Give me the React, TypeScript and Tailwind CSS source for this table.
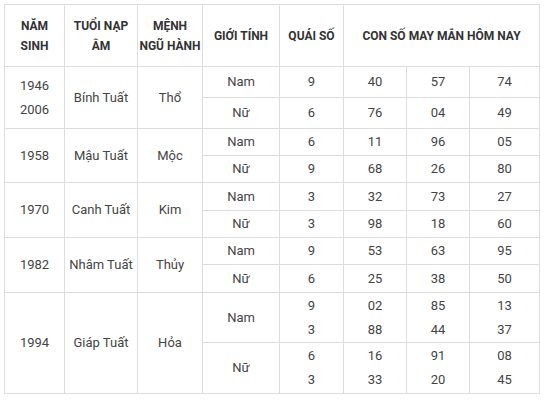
const rows = [
  {
    year: ["1946", "2006"],
    tuoi: "Bính Tuất",
    menh: "Thổ",
    h: ["h-[31px]", "h-[31px]"],
    sub: [
      { gt: "Nam", qs: ["9"], n: [["40", "57", "74"]] },
      { gt: "Nữ", qs: ["6"], n: [["76", "04", "49"]] },
    ],
  },
  {
    year: ["1958"],
    tuoi: "Mậu Tuất",
    menh: "Mộc",
    h: ["h-[27px]", "h-[27px]"],
    sub: [
      { gt: "Nam", qs: ["6"], n: [["11", "96", "05"]] },
      { gt: "Nữ", qs: ["9"], n: [["68", "26", "80"]] },
    ],
  },
  {
    year: ["1970"],
    tuoi: "Canh Tuất",
    menh: "Kim",
    h: ["h-[28px]", "h-[27px]"],
    sub: [
      { gt: "Nam", qs: ["3"], n: [["32", "73", "27"]] },
      { gt: "Nữ", qs: ["3"], n: [["98", "18", "60"]] },
    ],
  },
  {
    year: ["1982"],
    tuoi: "Nhâm Tuất",
    menh: "Thủy",
    h: ["h-[27px]", "h-[28px]"],
    sub: [
      { gt: "Nam", qs: ["9"], n: [["53", "63", "95"]] },
      { gt: "Nữ", qs: ["6"], n: [["25", "38", "50"]] },
    ],
  },
  {
    year: ["1994"],
    tuoi: "Giáp Tuất",
    menh: "Hỏa",
    h: ["h-[50px]", "h-[51px]"],
    sub: [
      { gt: "Nam", qs: ["9", "3"], n: [["02", "85", "13"], ["88", "44", "37"]] },
      { gt: "Nữ", qs: ["6", "3"], n: [["16", "91", "08"], ["33", "20", "45"]] },
    ],
  },
];

const td = "border border-[#dddddd] p-0 text-center align-middle";

function Lines({ items }: { items: string[] }) {
  return (
    <>
      {items.map((t, i) => (
        <div key={i} className="leading-[24px]">
          {t}
        </div>
      ))}
    </>
  );
}

export default function App() {
  return (
    <div className="bg-white w-[545px] h-[400px] pt-[4px] pl-[4px] font-['Roboto','Liberation_Sans',sans-serif] text-[13px] text-[#444]">
      <table className="table-fixed border-collapse w-[535px]">
        <colgroup>
          <col className="w-[60px]" />
          <col className="w-[73px]" />
          <col className="w-[65px]" />
          <col className="w-[77px]" />
          <col className="w-[64px]" />
          <col className="w-[63px]" />
          <col className="w-[63px]" />
          <col className="w-[70px]" />
        </colgroup>
        <thead>
          <tr className="h-[62px] font-bold text-[12px] text-[#333] leading-[20px] whitespace-nowrap">
            <th className={td}>NĂM<br />SINH</th>
            <th className={td}>TUỔI NẠP<br />ÂM</th>
            <th className={td}>MỆNH<br />NGŨ HÀNH</th>
            <th className={td}>GIỚI TÍNH</th>
            <th className={td}>QUÁI SỐ</th>
            <th className={td} colSpan={3}>CON SỐ MAY MẮN HÔM NAY</th>
          </tr>
        </thead>
        <tbody>
          {rows.map((r) =>
            r.sub.map((s, i) => (
              <tr key={r.tuoi + s.gt} className={r.h[i]}>
                {i === 0 && (
                  <>
                    <td className={td} rowSpan={2}>
                      <Lines items={r.year} />
                    </td>
                    <td className={td} rowSpan={2}>{r.tuoi}</td>
                    <td className={td} rowSpan={2}>{r.menh}</td>
                  </>
                )}
                <td className={td}>{s.gt}</td>
                <td className={td}>
                  <Lines items={s.qs} />
                </td>
                {[0, 1, 2].map((c) => (
                  <td key={c} className={td}>
                    <Lines items={s.n.map((line) => line[c])} />
                  </td>
                ))}
              </tr>
            ))
          )}
        </tbody>
      </table>
    </div>
  );
}
